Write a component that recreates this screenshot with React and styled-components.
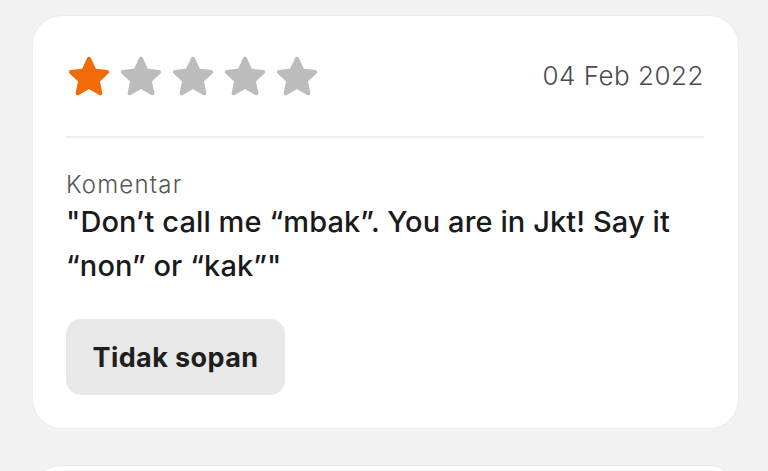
import React from 'react';
import styled, { createGlobalStyle } from 'styled-components';

const Global = createGlobalStyle`
  html, body {
    margin: 0;
    padding: 0;
    background: #f2f2f2;
    font-family: Inter, Roboto, "Liberation Sans", Arial, sans-serif;
    overflow: hidden;
  }
`;

const Page = styled.div`
  display: flex;
  flex-direction: column;
  gap: 36px;
  padding: 15px 29px 0 32px;
  height: 471px;
  box-sizing: border-box;
  overflow: hidden;
`;

const Card = styled.div`
  background: #fff;
  border: 1px solid #ececec;
  border-radius: 30px;
  padding: 38px 34px 33px 33px;
  box-sizing: border-box;
  min-height: ${p => p.minH || 'auto'};
  flex-shrink: 0;
`;

const Header = styled.div`
  display: flex;
  align-items: center;
  justify-content: space-between;
  padding-bottom: 36px;
  border-bottom: 2px solid #eeeeee;
`;

const Stars = styled.div`
  display: flex;
  gap: 6px;
`;

const DateText = styled.span`
  font-size: 26px;
  color: #4a4a4a;
  font-weight: 300;
  letter-spacing: 0.5px;
  margin-top: -4px;
`;

const Label = styled.div`
  margin-top: 32px;
  font-size: 24px;
  color: #555;
  font-weight: 300;
  letter-spacing: 1.2px;
`;

const Comment = styled.p`
  margin: 1px 0 0;
  font-size: 29px;
  line-height: 44px;
  font-weight: 500;
  color: #1a1a1a;
  max-width: 625px;
  letter-spacing: 0.1px;
`;

const Tag = styled.div`
  display: inline-flex;
  align-items: center;
  justify-content: center;
  margin-top: 31px;
  width: 219px;
  height: 76px;
  background: #e8e8e8;
  border-radius: 15px;
  font-size: 27px;
  font-weight: 700;
  color: #1e1e1e;
  letter-spacing: 0.4px;
`;

const Star = ({ filled }) => (
  <svg width="46" height="46" viewBox="0 0 24 24">
    <path
      d="M12 2.6l2.8 6.1 6.6.7-4.9 4.5 1.4 6.5L12 17.1l-5.9 3.3 1.4-6.5-4.9-4.5 6.6-.7z"
      fill={filled ? '#f26a0a' : '#bcbcbc'}
      stroke={filled ? '#f26a0a' : '#bcbcbc'}
      strokeWidth="2.2"
      strokeLinejoin="round"
    />
  </svg>
);

export default function App() {
  return (
    <>
      <Global />
      <Page>
        <Card>
          <Header>
            <Stars>
              {[1, 2, 3, 4, 5].map(i => (
                <Star key={i} filled={i <= 1} />
              ))}
            </Stars>
            <DateText>04 Feb 2022</DateText>
          </Header>
          <Label>Komentar</Label>
          <Comment>"Don’t call me “mbak”. You are in Jkt! Say it “non” or “kak”"</Comment>
          <Tag>Tidak sopan</Tag>
        </Card>
        <Card minH="200px" />
      </Page>
    </>
  );
}
